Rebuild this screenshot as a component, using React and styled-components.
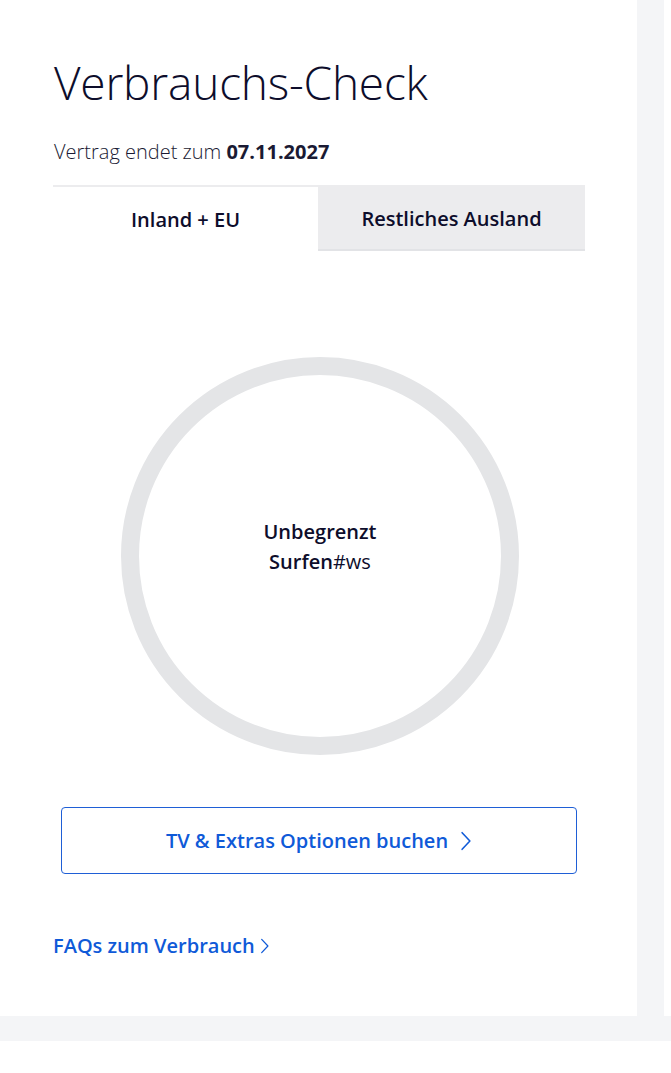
import styled, { createGlobalStyle } from 'styled-components';

const GlobalStyle = createGlobalStyle`
  html, body {
    margin: 0;
    padding: 0;
    background: #ffffff;
  }
  body {
    font-family: 'Open Sans', 'Noto Sans', sans-serif;
    color: #0d0d2b;
  }
`;

const Chevron = ({ size = 18 }) => (
  <svg width={size * 0.6} height={size} viewBox='0 0 10 18' fill='none'>
    <path d='M1.5 1.5 L8.5 9 L1.5 16.5' stroke='currentColor' strokeWidth='1.4' strokeLinecap='round' strokeLinejoin='round' />
  </svg>
);

const App = () => {
  return (
    <>
      <GlobalStyle />
      <Page>
        <Row>
          <Card>
            <Title>Verbrauchs-Check</Title>
            <Contract>
              Vertrag endet zum <strong>07.11.2027</strong>
            </Contract>
            <Tabs>
              <Tab $active>Inland + EU</Tab>
              <Tab>Restliches Ausland</Tab>
            </Tabs>
            <GaugeArea>
              <Ring>
                <RingLabel>
                  <strong>Unbegrenzt</strong>
                  <span>
                    <strong>Surfen</strong>#ws
                  </span>
                </RingLabel>
              </Ring>
            </GaugeArea>
            <OutlineButton>
              TV &amp; Extras Optionen buchen
              <Chevron size={20} />
            </OutlineButton>
            <TextLink>
              FAQs zum Verbrauch
              <Chevron size={16} />
            </TextLink>
          </Card>
          <Gutter />
          <Edge />
        </Row>
        <BottomBand />
      </Page>
    </>
  );
};

const Page = styled.div`
  width: 671px;
  background: #f4f5f7;
`;

const Row = styled.div`
  display: flex;
`;

const Card = styled.main`
  width: 637px;
  height: 1016px;
  box-sizing: border-box;
  background: #ffffff;
  padding: 54px 52px 0 53px;
  display: flex;
  flex-direction: column;
`;

const Gutter = styled.div`
  width: 27px;
`;

const Edge = styled.div`
  width: 7px;
  background: #ffffff;
`;

const BottomBand = styled.div`
  height: 25px;
`;

const Title = styled.h1`
  margin: 0 0 0 1px;
  font-weight: 300;
  font-size: 46px;
  line-height: 56px;
  letter-spacing: -0.2px;
  color: #0d0d2b;
`;

const Contract = styled.p`
  margin: 29px 0 0 1px;
  font-size: 20px;
  line-height: 26px;
  font-weight: 300;
  color: #1a1a33;

  strong {
    font-weight: 700;
  }
`;

const Tabs = styled.div`
  margin-top: 20px;
  width: 532px;
  display: grid;
  grid-template-columns: 265px 267px;
  height: 66px;
`;

const Tab = styled.div`
  display: flex;
  align-items: center;
  justify-content: center;
  font-size: 20px;
  font-weight: 600;
  color: #0d0d2b;
  box-sizing: border-box;
  background: ${(p) => (p.$active ? '#ffffff' : '#ececee')};
  border-top: 2px solid #ececee;
  border-bottom: ${(p) => (p.$active ? 'none' : '2px solid #e2e3e6')};
`;

const GaugeArea = styled.div`
  width: 532px;
  display: flex;
  justify-content: center;
  padding-top: 106px;
`;

const Ring = styled.div`
  width: 398px;
  height: 398px;
  box-sizing: border-box;
  border-radius: 50%;
  border: 18px solid #e4e5e7;
  display: flex;
  align-items: center;
  justify-content: center;
  margin-left: 2px;
`;

const RingLabel = styled.div`
  display: flex;
  flex-direction: column;
  align-items: center;
  font-size: 20px;
  line-height: 30px;
  color: #0d0d2b;
  margin-top: -18px;

  strong {
    font-weight: 600;
  }
`;

const OutlineButton = styled.button`
  margin: 52px 0 0 8px;
  width: 516px;
  height: 67px;
  background: #ffffff;
  border: 1.5px solid #1f5fd6;
  border-radius: 4px;
  color: #0f5ad8;
  font-family: inherit;
  font-size: 20px;
  font-weight: 600;
  display: flex;
  align-items: center;
  justify-content: center;
  gap: 12px;
  cursor: pointer;
`;

const TextLink = styled.a`
  margin-top: 58px;
  display: inline-flex;
  align-items: center;
  gap: 5px;
  font-size: 20px;
  font-weight: 600;
  color: #0f5ad8;
  text-decoration: none;
  align-self: flex-start;
`;

export default App;
